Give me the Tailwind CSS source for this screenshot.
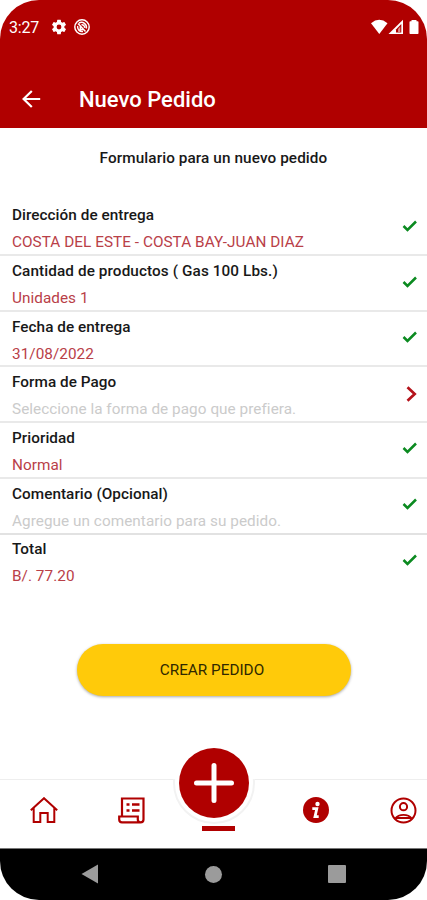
<!DOCTYPE html>
<html lang="es">
<head>
<meta charset="utf-8">
<title>Nuevo Pedido</title>
<script src="https://cdn.jsdelivr.net/npm/@tailwindcss/browser@4"></script>
</head>
<body class="bg-white">
<div class="w-[427px] h-[900px] rounded-[39px] overflow-hidden flex flex-col bg-white font-['Roboto',sans-serif] text-[#181818]">
  <header class="h-[128px] shrink-0 bg-[#b00000] text-white flex flex-col">
    <div class="h-[54px] shrink-0 flex items-center pl-[9px] pr-[7px]">
      <span class="text-[16px] w-[41px] pt-[2px] whitespace-nowrap tracking-[-0.2px]">3:27</span>
      <svg class="w-[18px] h-[18px] shrink-0" viewBox="0 0 24 24" fill="currentColor"><path d="M19.14 12.94c.04-.3.06-.61.06-.94s-.02-.64-.07-.94l2.03-1.58a.49.49 0 0 0 .12-.61l-1.92-3.32a.49.49 0 0 0-.59-.22l-2.39.96c-.5-.38-1.03-.7-1.62-.94l-.36-2.54A.48.48 0 0 0 13.92 2.4h-3.84a.48.48 0 0 0-.47.41l-.36 2.54c-.59.24-1.13.57-1.62.94l-2.39-.96a.48.48 0 0 0-.59.22L2.74 8.87a.48.48 0 0 0 .12.61l2.03 1.58c-.05.3-.09.63-.09.94s.02.64.07.94l-2.03 1.58a.49.49 0 0 0-.12.61l1.92 3.32c.12.22.37.29.59.22l2.39-.96c.5.38 1.03.7 1.62.94l.36 2.54c.05.24.24.41.48.41h3.84c.24 0 .44-.17.47-.41l.36-2.54c.59-.24 1.13-.56 1.62-.94l2.39.96c.22.08.47 0 .59-.22l1.92-3.32a.48.48 0 0 0-.12-.61zM12 15.2a3.2 3.2 0 1 1 0-6.4 3.2 3.2 0 0 1 0 6.4z"/></svg>
      <svg class="w-[18px] h-[18px] shrink-0 ml-[5px]" viewBox="0 0 18 18" fill="none" stroke="currentColor" stroke-width="1.5"><circle cx="9" cy="9" r="7.2"/><path d="M5 5.5l7.5 8M6 5a5 5 0 0 1 7.3 5.5M4.7 8a4.5 4.5 0 0 0 5.3 5.4M7.3 8.5v3h3M8.5 6.8a2.5 2.5 0 0 1 3 3"/></svg>
      <svg class="w-[49px] h-[16px] shrink-0 ml-auto" viewBox="0 0 49 16" fill="currentColor"><path d="M0 4.3Q8.2-2.6 16.5 4.3L8.3 15z"/><path d="M32 .8V15H17.5z"/><path d="M30.3 5v8.5h-5.3V10.5z" fill="#b00000"/><path d="M29.3 7.5v5.5h-2.2V10z" fill-opacity=".55"/><path d="M40.5 1h5v1.2h1.2q.8 0 .8.8v11.3q0 .8-.8.8h-7.4q-.8 0-.8-.8V3q0-.8.8-.8h1.2z"/></svg>
    </div>
    <div class="grow flex items-start pt-[34px] pl-[22px]">
      <svg class="mt-[2px] w-[19px] h-[18px] shrink-0" viewBox="0 0 19 18" fill="none" stroke="currentColor" stroke-width="2.2"><path d="M18.2 9H2M9.8 1L1.6 9l8.2 8"/></svg>
      <h1 class="ml-[38px] text-[22px] leading-[24px] font-medium whitespace-nowrap">Nuevo Pedido</h1>
    </div>
  </header>
  <main class="grow flex flex-col">
    <p class="h-[72.4px] shrink-0 pt-[20px] text-center text-[15.3px] leading-[20px] font-medium tracking-[0.1px] whitespace-nowrap">Formulario para un nuevo pedido</p>
    <div class="flex flex-col shrink-0 text-[15.3px] leading-[20px] tracking-[0.05px] whitespace-nowrap">
      <section class="h-[55.7px] border-b-2 border-[#e9e9e9] flex items-center justify-between pl-[12px] pr-[10px]">
        <div class="flex flex-col gap-[7px] mt-[3px]"><h2 class="font-medium">Dirección de entrega</h2><p class="text-[#b94048]">COSTA DEL ESTE - COSTA BAY-JUAN DIAZ</p></div>
        <svg class="w-[15px] h-[12px] -mt-[2px]" viewBox="0 0 15 12" fill="none" stroke="#0b8a20" stroke-width="2.5"><path d="M1.5 6l4 4L14 1.5"/></svg>
      </section>
      <section class="h-[55.7px] border-b-2 border-[#e9e9e9] flex items-center justify-between pl-[12px] pr-[10px]">
        <div class="flex flex-col gap-[7px] mt-[3px]"><h2 class="font-medium tracking-[0.1px]">Cantidad de productos ( Gas 100 Lbs.)</h2><p class="text-[#b94048]">Unidades 1</p></div>
        <svg class="w-[15px] h-[12px] -mt-[2px]" viewBox="0 0 15 12" fill="none" stroke="#0b8a20" stroke-width="2.5"><path d="M1.5 6l4 4L14 1.5"/></svg>
      </section>
      <section class="h-[55.7px] border-b-2 border-[#e9e9e9] flex items-center justify-between pl-[12px] pr-[10px]">
        <div class="flex flex-col gap-[7px] mt-[3px]"><h2 class="font-medium">Fecha de entrega</h2><p class="text-[#b94048]">31/08/2022</p></div>
        <svg class="w-[15px] h-[12px] -mt-[3px]" viewBox="0 0 15 12" fill="none" stroke="#0b8a20" stroke-width="2.5"><path d="M1.5 6l4 4L14 1.5"/></svg>
      </section>
      <section class="h-[55.7px] border-b-2 border-[#e9e9e9] flex items-center justify-between pl-[12px] pr-[10px]">
        <div class="flex flex-col gap-[7px] mt-[3px]"><h2 class="font-medium">Forma de Pago</h2><p class="text-[#cbcbcb]">Seleccione la forma de pago que prefiera.</p></div>
        <svg class="w-[11px] h-[16px]" viewBox="0 0 11 16" fill="none" stroke="#b5131b" stroke-width="2.7"><path d="M1.5 1.2L8.7 8l-7.2 6.8"/></svg>
      </section>
      <section class="h-[55.7px] border-b-2 border-[#e9e9e9] flex items-center justify-between pl-[12px] pr-[10px]">
        <div class="flex flex-col gap-[7px] mt-[3px]"><h2 class="font-medium">Prioridad</h2><p class="text-[#b94048]">Normal</p></div>
        <svg class="w-[15px] h-[12px] -mt-[3px]" viewBox="0 0 15 12" fill="none" stroke="#0b8a20" stroke-width="2.5"><path d="M1.5 6l4 4L14 1.5"/></svg>
      </section>
      <section class="h-[55.7px] border-b-2 border-[#e2e2e2] flex items-center justify-between pl-[12px] pr-[10px]">
        <div class="flex flex-col gap-[7px] mt-[3px]"><h2 class="font-medium">Comentario (Opcional)</h2><p class="text-[#cbcbcb]">Agregue un comentario para su pedido.</p></div>
        <svg class="w-[15px] h-[12px] -mt-[3px]" viewBox="0 0 15 12" fill="none" stroke="#0b8a20" stroke-width="2.5"><path d="M1.5 6l4 4L14 1.5"/></svg>
      </section>
      <section class="h-[55.7px] border-b-2 border-transparent flex items-center justify-between pl-[12px] pr-[10px]">
        <div class="flex flex-col gap-[7px] mt-[3px]"><h2 class="font-medium">Total</h2><p class="text-[#b94048]">B/. 77.20</p></div>
        <svg class="w-[15px] h-[12px] -mt-[2px]" viewBox="0 0 15 12" fill="none" stroke="#0b8a20" stroke-width="2.5"><path d="M1.5 6l4 4L14 1.5"/></svg>
      </section>
    </div>
    <button class="mt-[53.6px] mx-auto w-[274px] h-[52px] pt-[2px] pr-[3px] shrink-0 rounded-full bg-[#ffca0a] shadow-[0_1px_3px_rgba(0,0,0,0.35)] text-[15.3px] text-[#302800] whitespace-nowrap">CREAR PEDIDO</button>
  </main>
  <nav class="relative h-[70px] shrink-0 border-t border-[#eeeeee] text-[#b00000]">
    <div class="flex items-center h-[60px] pl-[30px]">
      <svg class="w-[28px] h-[26px] shrink-0" viewBox="0 0 28 26" fill="none" stroke="currentColor" stroke-width="2"><path d="M.8 13.2L14 1.2l13.2 12M3.7 11v13.9h6.6v-9h7.4v9h6.6V11"/></svg>
      <svg class="w-[27px] h-[27px] shrink-0 ml-[60px]" viewBox="0 0 27 27" fill="none" stroke="currentColor" stroke-width="2.2"><path d="M4 19V1.5h21.500v21q0 2.800-3 2.800H4q-2.800 0-2.800-2.800V19.500h18.600v3q0 2.500 2.700 2.800"/><path d="M8.500 7.500h3M14 7.500h7.500M8.500 13.500h3M14 13.500h7.500" stroke-width="2.400"/></svg>
      <svg class="w-[26px] h-[26px] shrink-0 ml-[158px]" viewBox="0 0 26 26"><circle cx="13" cy="13" r="13" fill="currentColor"/><circle cx="14.5" cy="7" r="2.2" fill="#fff"/><path d="M9.300 11.700h4.500l-1.800 8h3.700" fill="none" stroke="#fff" stroke-width="2.800"/></svg>
      <svg class="w-[27px] h-[27px] shrink-0 ml-[61px]" viewBox="0 0 27 27" fill="none" stroke="currentColor" stroke-width="2"><circle cx="13.500" cy="13.500" r="12"/><circle cx="13.500" cy="9.700" r="3.600"/><path d="M5.200 21.500Q8 17.800 13.500 17.800t8.300 3.700M6 21h15" stroke-width="1.800"/></svg>
    </div>
    <div class="absolute left-[173px] -top-[38px] w-[82px] h-[82px] rounded-full bg-white border-2 border-[#f2f2f2] [clip-path:inset(37px_0_0_0)]"></div>
    <div class="absolute left-[179px] -top-[32px] w-[70px] h-[70px] rounded-full bg-[#b00000] flex items-center justify-center">
      <svg class="w-[40px] h-[40px]" viewBox="0 0 40 40" fill="none" stroke="#fff" stroke-width="5" stroke-linecap="round"><path d="M20 2.500v35M2.500 20h35"/></svg>
    </div>
    <div class="absolute left-[202px] top-[46px] w-[33px] h-[5px] bg-[#b00000]"></div>
  </nav>
  <footer class="h-[52px] -mt-px shrink-0 bg-black border-t border-[#777] flex items-center justify-between px-[81px] pb-[1px]">
    <svg class="w-[18px] h-[20px] text-[#9b9b9b]" viewBox="0 0 18 20" fill="currentColor"><path d="M.5 10L17 .5v19z"/></svg>
    <div class="w-[17px] h-[17px] rounded-full bg-[#9b9b9b]"></div>
    <div class="w-[18px] h-[18px] rounded-[1px] bg-[#9b9b9b]"></div>
  </footer>
</div>
</body>
</html>
